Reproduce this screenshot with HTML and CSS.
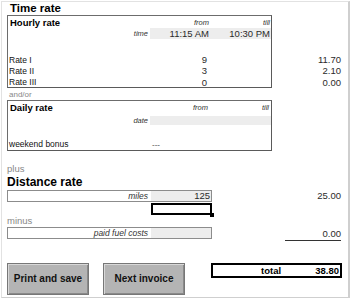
FILE: index.html
```html
<!DOCTYPE html>
<html lang="en">
<head>
    <meta charset="UTF-8">
    <meta name="viewport" content="width=device-width, initial-scale=1.0">
    <link rel="stylesheet" href="styles.css">
</head>
<body>

<div class="sheet">
    <div class="title">Time rate</div>

    <!-- hourly rate -->
    <div class="section">
        <div class="box hourly">
            <div class="row row-head">
                <span class="name">Hourly rate</span>
                <span class="hint">from</span>
                <span class="hint">till</span>
            </div>
            <div class="row row-time">
                <span class="hint">time</span>
                <span class="cell shade">11:15 AM</span>
                <span class="cell shade">10:30 PM</span>
            </div>
            <div class="row row-gap"></div>
            <div class="row row-rate">
                <span class="label">Rate I</span>
                <span class="num">9</span>
                <span></span>
            </div>
            <div class="row row-rate">
                <span class="label">Rate II</span>
                <span class="num">3</span>
                <span></span>
            </div>
            <div class="row row-rate last">
                <span class="label">Rate III</span>
                <span class="num">0</span>
                <span></span>
            </div>
        </div>
        <div class="totals hourly-totals">
            <div class="sum">11.70</div>
            <div class="sum">2.10</div>
            <div class="sum last">0.00</div>
        </div>
    </div>

    <div class="note note-small">and/or</div>

    <!-- daily rate -->
    <div class="section">
        <div class="box daily">
            <div class="row row-dhead">
                <span class="name">Daily rate</span>
                <span class="hint">from</span>
                <span class="hint">till</span>
            </div>
            <div class="row row-date">
                <span class="hint">date</span>
                <span class="cell shade"></span>
                <span class="cell shade"></span>
            </div>
            <div class="row row-dgap"></div>
            <div class="row row-bonus">
                <span class="label">weekend bonus</span>
                <span class="dash">---</span>
                <span></span>
            </div>
        </div>
    </div>

    <div class="note note-plus">plus</div>
    <div class="title title-distance">Distance rate</div>

    <div class="section">
        <div class="line">
            <span class="hint">miles</span>
            <span class="cell shade">125</span>
        </div>
        <div class="totals">
            <div class="sum">25.00</div>
        </div>
    </div>

    <div class="selected"><span class="handle"></span></div>

    <div class="note note-minus">minus</div>

    <div class="section">
        <div class="line">
            <span class="hint">paid fuel costs</span>
            <span class="cell shade"></span>
        </div>
        <div class="totals">
            <div class="sum underline">0.00</div>
        </div>
    </div>

    <div class="actions">
        <button class="btn">Print and save</button>
        <button class="btn">Next invoice</button>
        <div class="total">
            <span>total</span>
            <span>38.80</span>
        </div>
    </div>
</div>

</body>
</html>
```

FILE: styles.css
```css
body {
    margin: 0;
    padding: 0;
    background: #ffffff;
    font-family: 'Liberation Sans', Arial, sans-serif;
    color: #1a1a1a;
}

.sheet {
    margin: 1px;
    width: 341px;
    height: 295px;
    padding-left: 5px;
    border: 1px solid #cfcfcf;
    border-right: 2px solid #cfcfcf;
    border-left-color: #e2e2e2;
    border-top-color: #e2e2e2;
    box-sizing: content-box;
}

.title {
    height: 13px;
    line-height: 13px;
    padding-left: 3px;
    font-size: 11.5px;
    font-weight: bold;
    color: #000;
}

.section {
    display: flex;
    align-items: flex-start;
    width: 334px;
}

.box {
    width: 263px;
    border: 1px solid #6c6c6c;
    border-right-color: #5a5a5a;
    border-bottom-color: #5a5a5a;
}

.row {
    display: grid;
    grid-template-columns: 142px 60px 61px;
    align-items: center;
    font-size: 8px;
}

.row span {
    white-space: nowrap;
}

.name {
    padding-left: 2px;
    font-size: 9.5px;
    font-weight: bold;
    color: #000;
}

.hint {
    text-align: right;
    padding-right: 2px;
    font-style: italic;
    font-size: 7.5px;
    color: #333;
}

.row-head .hint {
    padding-right: 1px;
}

.cell {
    display: block;
    text-align: right;
    padding-right: 1px;
    font-size: 9.5px;
    color: #2a2a2a;
}

.shade {
    background: #ededed;
}

.label {
    padding-left: 1px;
    font-size: 8.5px;
    color: #111;
}

.num {
    text-align: right;
    padding-right: 3px;
    font-size: 9.5px;
    color: #2a2a2a;
}

.row-head { height: 12px; }
.row-time { height: 11px; }
.row-time .cell { height: 11px; line-height: 11px; }
.row-gap { height: 15px; }
.row-rate { height: 11.3px; }
.row-rate.last { height: 10.4px; }

.row-dhead { height: 14px; }
.row-date { height: 11px; }
.row-date .cell { height: 9px; margin-top: 1px; }
.row-dgap { height: 13px; }
.row-bonus { height: 11px; }

.dash {
    padding-left: 2px;
    color: #444;
}

.totals {
    width: 69px;
    margin-left: auto;
    text-align: right;
    font-size: 9.5px;
    color: #2a2a2a;
}

.hourly-totals {
    padding-top: 39px;
}

.sum {
    height: 11.3px;
    line-height: 11.3px;
}

.sum.last {
    height: 10.4px;
}

.underline {
    width: 56px;
    margin-left: auto;
    height: 13px;
    line-height: 13px;
    border-bottom: 1px solid #333;
}

.note {
    padding-left: 2px;
    color: #888888;
}

.note-small {
    height: 12px;
    line-height: 13px;
    font-size: 8px;
}

.note-plus {
    margin-top: 12px;
    height: 12px;
    line-height: 12px;
    padding-left: 0;
    font-size: 9.5px;
}

.title-distance {
    height: 15px;
    line-height: 15px;
    padding-left: 0;
    font-size: 12px;
}

.line {
    display: grid;
    grid-template-columns: 143px 60px;
    width: 203px;
    height: 10px;
    border: 1px solid #8c8c8c;
    align-items: center;
}

.line .hint {
    font-size: 8.5px;
    padding-right: 3px;
}

.line .cell {
    height: 10px;
    line-height: 10px;
}

.selected {
    position: relative;
    width: 57px;
    height: 8px;
    margin: 1px 0 0 144px;
    border: 2px solid #000;
}

.handle {
    position: absolute;
    right: -4px;
    bottom: -4px;
    width: 4px;
    height: 4px;
    background: #000;
}

.note-minus {
    height: 12px;
    line-height: 12px;
    margin-top: 0;
    padding-left: 0;
    font-size: 9.5px;
}

.actions {
    display: flex;
    align-items: flex-start;
    margin-top: 22px;
}

.btn {
    width: 82px;
    height: 32px;
    margin: 0 14px 0 0;
    padding: 0;
    white-space: nowrap;
    background: #b4b4b4;
    border: 1px solid #777777;
    box-shadow: inset 1px 1px 0 #d8d8d8, inset -1px -1px 0 #8a8a8a;
    font-family: 'Liberation Sans', Arial, sans-serif;
    font-size: 10px;
    font-weight: bold;
    color: #111;
}

.btn + .btn {
    margin-right: 0;
}

.total {
    display: flex;
    justify-content: space-between;
    align-items: center;
    width: 78px;
    height: 11px;
    margin-left: 26px;
    padding: 0 1px 0 48px;
    border: 2px solid #000;
    font-size: 9.5px;
    font-weight: bold;
    color: #000;
    box-sizing: content-box;
}
```
